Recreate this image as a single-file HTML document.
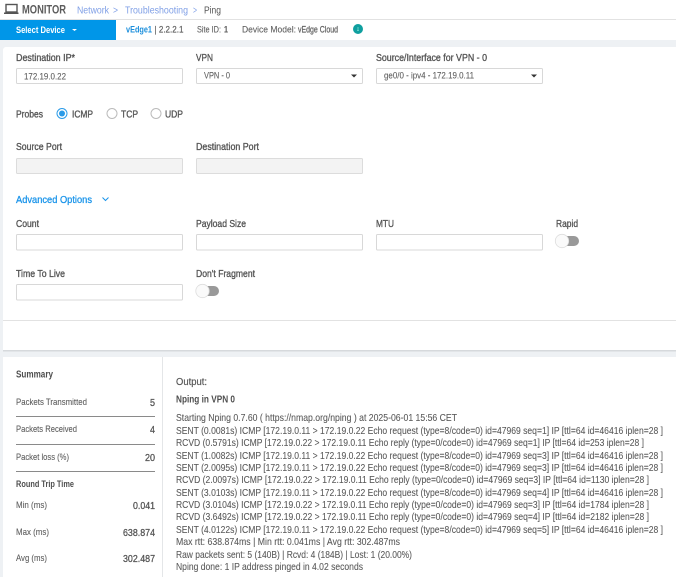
<!DOCTYPE html>
<html><head><meta charset="utf-8"><style>
html,body{margin:0;padding:0;background:#fff;width:676px;height:577px;overflow:hidden}
svg{display:block;position:absolute;left:0;top:0}
text{font-family:"Liberation Sans",sans-serif;font-size:10.5px;fill:#555;white-space:pre}
.l{stroke:#555;stroke-width:.35px}
.b{font-weight:bold;fill:#4e4e4e}
.o{fill:#585858;font-size:10.5px;stroke:#585858;stroke-width:.08px}
.s{font-size:9.5px;fill:#5e5e5e;stroke:#5e5e5e;stroke-width:.1px}
.i{fill:#fff;stroke:#d8d8d8;stroke-width:1}
.d{fill:#f3f3f3;stroke:#dcdcdc;stroke-width:1}
.lk{fill:#7f9fe6}
.v{font-size:10.5px;fill:#555;stroke:#555;stroke-width:.3px}
</style></head><body>
<svg width="676" height="577" viewBox="0 0 676 577" xmlns="http://www.w3.org/2000/svg">
<rect width="676" height="577" fill="#fff"/>
<rect y="19" width="676" height="1" fill="#e2e2e2"/>
<rect y="40" width="676" height="7" fill="#eef1f4"/>
<rect y="20" width="116" height="20" fill="#0096e8"/>
<!-- laptop icon -->
<rect x="6" y="4.500" width="11" height="7.500" fill="none" stroke="#555" stroke-width="1.400"/>
<rect x="4" y="12.500" width="14.500" height="1.500" fill="#555"/>
<text x="22" y="13.500" class="b" style="font-size:11.500px;fill:#5c5c5c" textLength="44" lengthAdjust="spacingAndGlyphs">MONITOR</text>
<text x="77" y="13.500" class="lk" textLength="32" lengthAdjust="spacingAndGlyphs">Network</text>
<text x="113" y="13.500" class="lk" textLength="5" lengthAdjust="spacingAndGlyphs">&gt;</text>
<text x="125" y="13.500" class="lk" textLength="63" lengthAdjust="spacingAndGlyphs">Troubleshooting</text>
<text x="193" y="13.500" class="lk" textLength="4" lengthAdjust="spacingAndGlyphs">&gt;</text>
<text x="204" y="13.500" textLength="17" lengthAdjust="spacingAndGlyphs">Ping</text>
<text x="16" y="33" style="fill:#fff;font-weight:bold;font-size:9.500px" textLength="49" lengthAdjust="spacingAndGlyphs">Select Device</text>
<polygon points="72,29 77,29 74.500,31" fill="#fff"/>
<text x="126" y="32.500" style="fill:#1c8fdc;font-weight:bold;font-size:9.500px" textLength="26" lengthAdjust="spacingAndGlyphs">vEdge1</text>
<text x="154.500" y="32.500" class="s" style="stroke-width:.2px" textLength="29" lengthAdjust="spacingAndGlyphs">| 2.2.2.1</text>
<text x="197" y="32.500" class="s" textLength="24" lengthAdjust="spacingAndGlyphs">Site ID:</text>
<text x="224" y="32.500" class="s" style="font-weight:bold" textLength="4" lengthAdjust="spacingAndGlyphs">1</text>
<text x="242" y="32.500" class="s" textLength="54" lengthAdjust="spacingAndGlyphs">Device Model:</text>
<text x="298" y="32.500" class="s" style="stroke-width:.25px" textLength="40" lengthAdjust="spacingAndGlyphs">vEdge Cloud</text>
<circle cx="358" cy="29" r="5" fill="#0f9f9f"/>
<rect x="357.500" y="27.500" width="1" height="1" fill="#bfe"/><rect x="357.500" y="29.500" width="1" height="1.500" fill="#bfe"/>

<!-- card 1 -->
<rect x="0" y="47" width="3" height="310" fill="#eef1f4"/>
<path d="M3 47h3a3 3 0 0 0-3 3z" fill="#eef1f4"/>
<rect x="3" y="350" width="673" height="1.500" fill="#d6d9dc"/>
<rect x="0" y="351.500" width="676" height="5.500" fill="#eef1f4"/>
<rect x="0" y="357" width="3" height="220" fill="#eef1f4"/>
<rect x="3" y="320" width="673" height="1" fill="#e2e2e2"/>

<text x="16" y="61" class="l" textLength="59" lengthAdjust="spacingAndGlyphs">Destination IP*</text>
<text x="196" y="61" class="l" textLength="17" lengthAdjust="spacingAndGlyphs">VPN</text>
<text x="376" y="61" class="l" textLength="111" lengthAdjust="spacingAndGlyphs">Source/Interface for VPN - 0</text>
<rect x="16.500" y="68.500" width="166" height="15" rx="1" class="i"/>
<text x="24" y="79.500" class="s" textLength="42" lengthAdjust="spacingAndGlyphs">172.19.0.22</text>
<rect x="196.500" y="68.500" width="166" height="15" rx="1" class="i"/>
<text x="204" y="78.500" class="s" textLength="26" lengthAdjust="spacingAndGlyphs">VPN - 0</text>
<polygon points="351,74.500 357,74.500 354,77.500" fill="#333"/>
<rect x="376.500" y="68.500" width="166" height="15" rx="1" class="i"/>
<text x="384" y="78.500" class="s" textLength="90" lengthAdjust="spacingAndGlyphs">ge0/0 - ipv4 - 172.19.0.11</text>
<polygon points="531,74.500 537,74.500 534,77.500" fill="#333"/>

<text x="16" y="117.500" class="l" textLength="27" lengthAdjust="spacingAndGlyphs">Probes</text>
<circle cx="62" cy="113.500" r="5" fill="#fff" stroke="#2a9be8" stroke-width="1"/>
<circle cx="62" cy="113.500" r="3" fill="#2a9be8"/>
<text x="72" y="117.500" class="l" textLength="21" lengthAdjust="spacingAndGlyphs">ICMP</text>
<circle cx="112" cy="113.500" r="5" fill="#fff" stroke="#bbb" stroke-width="1"/>
<text x="121" y="117.500" class="l" textLength="17" lengthAdjust="spacingAndGlyphs">TCP</text>
<circle cx="156" cy="113.500" r="5" fill="#fff" stroke="#bbb" stroke-width="1"/>
<text x="165" y="117.500" class="l" textLength="18" lengthAdjust="spacingAndGlyphs">UDP</text>

<text x="16" y="150" class="l" textLength="46" lengthAdjust="spacingAndGlyphs">Source Port</text>
<text x="196" y="150" class="l" textLength="63" lengthAdjust="spacingAndGlyphs">Destination Port</text>
<rect x="16.500" y="158.500" width="166" height="15" rx="1" class="d"/>
<rect x="196.500" y="158.500" width="166" height="15" rx="1" class="d"/>

<text x="16" y="203" style="fill:#1a94ea;stroke:#1a94ea;stroke-width:.3px" textLength="76" lengthAdjust="spacingAndGlyphs">Advanced Options</text>
<path d="M102.500 197.500 L105.500 200.500 L108.500 197.500" fill="none" stroke="#1a94ea" stroke-width="1"/>

<text x="16" y="227" class="l" textLength="23" lengthAdjust="spacingAndGlyphs">Count</text>
<text x="196" y="227" class="l" textLength="50" lengthAdjust="spacingAndGlyphs">Payload Size</text>
<text x="376" y="227" class="l" textLength="18" lengthAdjust="spacingAndGlyphs">MTU</text>
<text x="556" y="227" class="l" textLength="22" lengthAdjust="spacingAndGlyphs">Rapid</text>
<rect x="16.500" y="234.500" width="166" height="15.500" rx="1" class="i"/>
<rect x="196.500" y="234.500" width="166" height="15.500" rx="1" class="i"/>
<rect x="376.500" y="234.500" width="166" height="15.500" rx="1" class="i"/>
<rect x="558" y="236" width="21" height="10" rx="5" fill="#999"/>
<circle cx="562" cy="241" r="6.700" fill="#fafafa" stroke="#ddd" stroke-width=".8"/>

<text x="16" y="277" class="l" textLength="49" lengthAdjust="spacingAndGlyphs">Time To Live</text>
<text x="196" y="277" class="l" textLength="59" lengthAdjust="spacingAndGlyphs">Don't Fragment</text>
<rect x="16.500" y="284.500" width="166" height="15.500" rx="1" class="i"/>
<rect x="198" y="286" width="21" height="10" rx="5" fill="#999"/>
<circle cx="202.500" cy="291" r="6.700" fill="#fafafa" stroke="#ddd" stroke-width=".8"/>

<!-- card 2 -->
<rect x="162" y="357" width="1" height="220" fill="#e4e6e8"/>
<text x="16" y="377.500" class="b" style="font-size:10px" textLength="37" lengthAdjust="spacingAndGlyphs">Summary</text>
<text x="16" y="405" class="s" textLength="71" lengthAdjust="spacingAndGlyphs">Packets Transmitted</text>
<text x="150" y="406" class="v" textLength="5" lengthAdjust="spacingAndGlyphs">5</text>
<rect x="16" y="416" width="139" height="1" fill="#8a8a8a"/>
<text x="16" y="432" class="s" textLength="61" lengthAdjust="spacingAndGlyphs">Packets Received</text>
<text x="150" y="433" class="v" textLength="5" lengthAdjust="spacingAndGlyphs">4</text>
<rect x="16" y="444" width="139" height="1" fill="#8a8a8a"/>
<text x="16" y="460" class="s" textLength="53" lengthAdjust="spacingAndGlyphs">Packet loss (%)</text>
<text x="145" y="461" class="v" textLength="10" lengthAdjust="spacingAndGlyphs">20</text>
<rect x="16" y="471" width="139" height="1" fill="#8a8a8a"/>
<text x="16" y="487" class="b" style="font-size:9.500px" textLength="58" lengthAdjust="spacingAndGlyphs">Round Trip Time</text>
<text x="16" y="508" class="s" textLength="31" lengthAdjust="spacingAndGlyphs">Min (ms)</text>
<text x="133" y="509" class="v" textLength="22" lengthAdjust="spacingAndGlyphs">0.041</text>
<text x="16" y="535" class="s" textLength="33" lengthAdjust="spacingAndGlyphs">Max (ms)</text>
<text x="123" y="536" class="v" textLength="32" lengthAdjust="spacingAndGlyphs">638.874</text>
<text x="16" y="561" class="s" textLength="31" lengthAdjust="spacingAndGlyphs">Avg (ms)</text>
<text x="123" y="562" class="v" textLength="32" lengthAdjust="spacingAndGlyphs">302.487</text>

<text x="176" y="385" class="o" textLength="31" lengthAdjust="spacingAndGlyphs" style="stroke-width:.2px">Output:</text>
<text x="176" y="402.500" class="b" style="font-size:10px" textLength="59" lengthAdjust="spacingAndGlyphs">Nping in VPN 0</text>
<text x="176" y="421" class="o" textLength="281" lengthAdjust="spacingAndGlyphs">Starting Nping 0.7.60 ( https://nmap.org/nping ) at 2025-06-01 15:56 CET</text>
<text x="176" y="434" class="o" textLength="487" lengthAdjust="spacingAndGlyphs">SENT (0.0081s) ICMP [172.19.0.11 &gt; 172.19.0.22 Echo request (type=8/code=0) id=47969 seq=1] IP [ttl=64 id=46416 iplen=28 ]</text>
<text x="176" y="446" class="o" textLength="468" lengthAdjust="spacingAndGlyphs">RCVD (0.5791s) ICMP [172.19.0.22 &gt; 172.19.0.11 Echo reply (type=0/code=0) id=47969 seq=1] IP [ttl=64 id=253 iplen=28 ]</text>
<text x="176" y="459" class="o" textLength="487" lengthAdjust="spacingAndGlyphs">SENT (1.0082s) ICMP [172.19.0.11 &gt; 172.19.0.22 Echo request (type=8/code=0) id=47969 seq=3] IP [ttl=64 id=46416 iplen=28 ]</text>
<text x="176" y="471" class="o" textLength="487" lengthAdjust="spacingAndGlyphs">SENT (2.0095s) ICMP [172.19.0.11 &gt; 172.19.0.22 Echo request (type=8/code=0) id=47969 seq=3] IP [ttl=64 id=46416 iplen=28 ]</text>
<text x="176" y="483" class="o" textLength="473" lengthAdjust="spacingAndGlyphs">RCVD (2.0097s) ICMP [172.19.0.22 &gt; 172.19.0.11 Echo reply (type=0/code=0) id=47969 seq=3] IP [ttl=64 id=1130 iplen=28 ]</text>
<text x="176" y="496" class="o" textLength="487" lengthAdjust="spacingAndGlyphs">SENT (3.0103s) ICMP [172.19.0.11 &gt; 172.19.0.22 Echo request (type=8/code=0) id=47969 seq=4] IP [ttl=64 id=46416 iplen=28 ]</text>
<text x="176" y="508" class="o" textLength="473" lengthAdjust="spacingAndGlyphs">RCVD (3.0104s) ICMP [172.19.0.22 &gt; 172.19.0.11 Echo reply (type=0/code=0) id=47969 seq=3] IP [ttl=64 id=1784 iplen=28 ]</text>
<text x="176" y="520" class="o" textLength="473" lengthAdjust="spacingAndGlyphs">RCVD (3.6492s) ICMP [172.19.0.22 &gt; 172.19.0.11 Echo reply (type=0/code=0) id=47969 seq=4] IP [ttl=64 id=2182 iplen=28 ]</text>
<text x="176" y="533" class="o" textLength="487" lengthAdjust="spacingAndGlyphs">SENT (4.0122s) ICMP [172.19.0.11 &gt; 172.19.0.22 Echo request (type=8/code=0) id=47969 seq=5] IP [ttl=64 id=46416 iplen=28 ]</text>
<text x="176" y="545" class="o" textLength="224" lengthAdjust="spacingAndGlyphs">Max rtt: 638.874ms | Min rtt: 0.041ms | Avg rtt: 302.487ms</text>
<text x="176" y="558" class="o" textLength="236" lengthAdjust="spacingAndGlyphs">Raw packets sent: 5 (140B) | Rcvd: 4 (184B) | Lost: 1 (20.00%)</text>
<text x="176" y="570" class="o" textLength="187" lengthAdjust="spacingAndGlyphs">Nping done: 1 IP address pinged in 4.02 seconds</text>
</svg>
</body></html>
